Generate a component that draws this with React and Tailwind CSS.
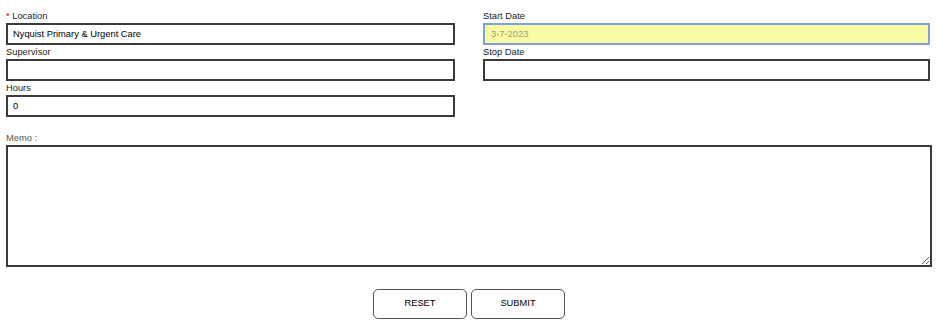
export default function App() {
  const label = "block h-[14px] text-[9.33px] leading-[14px] text-[#222]";
  const input =
    "block h-[22px] w-full border-2 border-[#3a3a3a] bg-white px-[5px] text-[9.33px] text-black outline-none";
  return (
    <div className="w-[936px] h-[326px] bg-white pt-[9px] px-[6px] font-['Liberation_Sans',Arial,sans-serif]">
      <div className="flex">
        <div className="w-[450px] flex flex-col">
          <label className={label}>
            <span className="text-[#c00]">*</span> Location
          </label>
          <input className={input} defaultValue="Nyquist Primary & Urgent Care" />
          <label className={label}>Supervisor</label>
          <input className={input} defaultValue="" />
          <label className={label}>Hours</label>
          <input className={input} defaultValue="0" />
        </div>
        <div className="ml-[28px] w-[448px] flex flex-col">
          <label className={label}>Start Date</label>
          <input
            className="block h-[22px] w-full border-2 border-[#7fa0d8] bg-[#f7fba6] px-[6px] text-[9.33px] text-[#a0a070] outline-none"
            defaultValue="3-7-2023"
          />
          <label className={label}>Stop Date</label>
          <input className={input} defaultValue="" />
        </div>
      </div>
      <div className="mt-[14px]">
        <label className="block h-[14px] text-[9.33px] leading-[14px] text-[#555]">Memo :</label>
        <textarea className="block h-[122px] w-[926px] border-2 border-[#3a3a3a] bg-white outline-none resize-y" />
      </div>
      <div className="mt-[22px] flex justify-center gap-[4px] pl-[2px]">
        <button className="h-[30px] w-[94px] rounded-[5px] border border-[#555] bg-white text-[9.33px] text-black">
          RESET
        </button>
        <button className="h-[30px] w-[94px] rounded-[5px] border border-[#555] bg-white text-[9.33px] text-black">
          SUBMIT
        </button>
      </div>
    </div>
  );
}
